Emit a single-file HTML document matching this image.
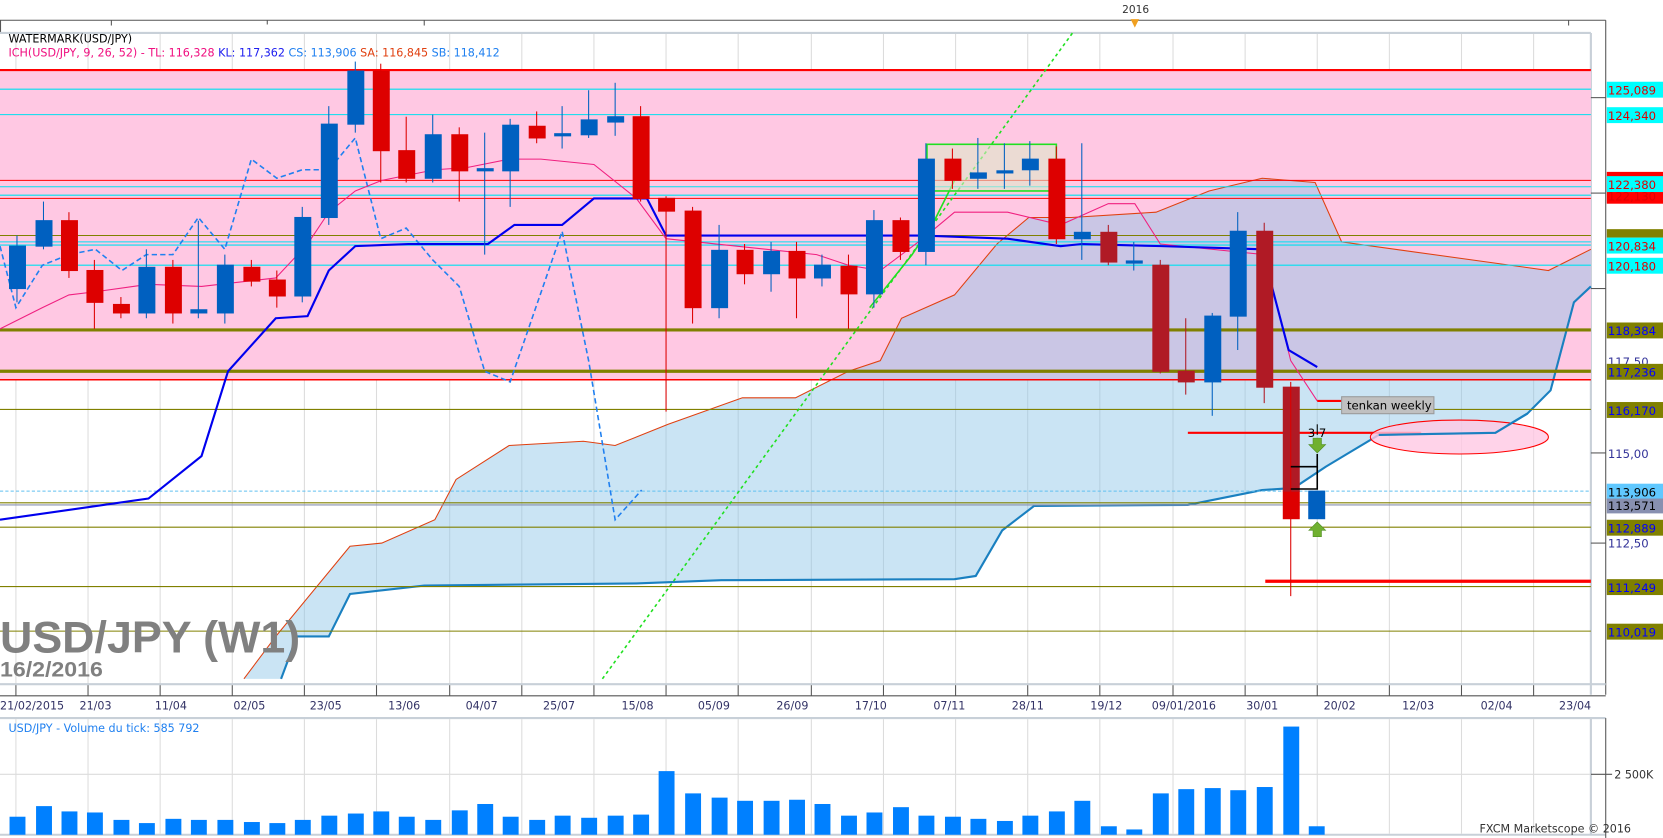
<!DOCTYPE html>
<html><head><meta charset="utf-8"><style>
html,body{margin:0;padding:0;background:#fff;overflow:hidden}
svg{display:block}
text{font-family:"DejaVu Sans","Liberation Sans",sans-serif}
</style></head><body>
<svg width="1663" height="838" viewBox="0 0 1568 790" xmlns="http://www.w3.org/2000/svg">
<rect width="1568" height="790" fill="#fff"/>
<line x1="0" y1="19" x2="1514" y2="19" stroke="#555" stroke-width="1"/>
<line x1="0.5" y1="19" x2="0.5" y2="32" stroke="#555"/>
<line x1="105" y1="19" x2="105" y2="24" stroke="#555"/><line x1="252" y1="19" x2="252" y2="23" stroke="#555"/><line x1="400" y1="19" x2="400" y2="24" stroke="#555"/>
<line x1="1479" y1="19" x2="1479" y2="24" stroke="#555"/>
<text x="1058" y="12" font-size="10" fill="#333">2016</text>
<polygon points="1066,18 1074,18 1070,26" fill="#f0a020"/>
<line x1="1514" y1="19" x2="1514" y2="655" stroke="#555"/>
<line x1="0" y1="31" x2="1500" y2="31" stroke="#c8d0d8" stroke-width="2"/>
<line x1="1500" y1="31" x2="1500" y2="655" stroke="#c8d0d8" stroke-width="2"/>
<g stroke="#dcdcdc" stroke-width="1">
<line x1="15" y1="32" x2="15" y2="645"/><line x1="83" y1="32" x2="83" y2="645"/><line x1="151" y1="32" x2="151" y2="645"/><line x1="219" y1="32" x2="219" y2="645"/><line x1="287" y1="32" x2="287" y2="645"/><line x1="355" y1="32" x2="355" y2="645"/><line x1="424" y1="32" x2="424" y2="645"/><line x1="492" y1="32" x2="492" y2="645"/><line x1="560" y1="32" x2="560" y2="645"/><line x1="628" y1="32" x2="628" y2="645"/><line x1="696" y1="32" x2="696" y2="645"/><line x1="765" y1="32" x2="765" y2="645"/><line x1="833" y1="32" x2="833" y2="645"/><line x1="901" y1="32" x2="901" y2="645"/><line x1="969" y1="32" x2="969" y2="645"/><line x1="1037" y1="32" x2="1037" y2="645"/><line x1="1106" y1="32" x2="1106" y2="645"/><line x1="1174" y1="32" x2="1174" y2="645"/><line x1="1242" y1="32" x2="1242" y2="645"/><line x1="1310" y1="32" x2="1310" y2="645"/><line x1="1378" y1="32" x2="1378" y2="645"/><line x1="1446" y1="32" x2="1446" y2="645"/>
</g>
<rect x="0" y="66" width="1500" height="292" fill="#ffc8e3"/>
<polygon fill="#8ac4e6" fill-opacity="0.45" points="230,640 260,600 330,515 360,512 410,490 430,452 480,420 550,416 580,420 630,400 700,375 750,375 800,350 830,340 850,300 900,278 940,230 970,205 1010,205 1090,200 1140,180 1190,168 1240,172 1265,228 1460,255 1500,235 1500,270 1484,285 1462,368 1440,390 1410,408 1300,410 1270,428 1250,440 1220,460 1190,462 1150,470 1120,476 975,477 945,500 920,543 900,546 680,547 600,550 400,552 330,560 310,600 280,600 265,640"/>
<polyline fill="none" stroke="#e04010" stroke-width="1" points="230,640 260,600 330,515 360,512 410,490 430,452 480,420 550,416 580,420 630,400 700,375 750,375 800,350 830,340 850,300 900,278 940,230 970,205 1010,205 1090,200 1140,180 1190,168 1240,172 1265,228 1460,255 1500,235"/>
<polyline fill="none" stroke="#1a80c0" stroke-width="2" points="265,640 280,600 310,600 330,560 400,552 600,550 680,547 900,546 920,543 945,500 975,477 1120,476 1150,470 1190,462 1220,460 1250,440 1270,428 1300,410 1410,408 1440,390 1462,368 1484,285 1500,270"/>
<g>
<line x1="0" y1="66" x2="1500" y2="66" stroke="#ff0000" stroke-width="2"/>
<line x1="0" y1="84" x2="1500" y2="84" stroke="#00e0f0"/>
<line x1="0" y1="108" x2="1500" y2="108" stroke="#00e0f0"/>
<line x1="0" y1="170" x2="1500" y2="170" stroke="#ff0000"/>
<line x1="0" y1="176" x2="1500" y2="176" stroke="#00e0f0"/>
<line x1="0" y1="184" x2="1500" y2="184" stroke="#00e0f0"/>
<line x1="0" y1="187" x2="1500" y2="187" stroke="#ff0000"/>
<line x1="0" y1="222" x2="1500" y2="222" stroke="#808000"/>
<line x1="0" y1="228" x2="1500" y2="228" stroke="#00e0f0"/>
<line x1="0" y1="231" x2="1500" y2="231" stroke="#00e0f0"/>
<line x1="0" y1="250" x2="1500" y2="250" stroke="#00e0f0"/>
<line x1="0" y1="311" x2="1500" y2="311" stroke="#808000" stroke-width="3"/>
<line x1="0" y1="350" x2="1500" y2="350" stroke="#808000" stroke-width="3"/>
<line x1="0" y1="358" x2="1500" y2="358" stroke="#ff0000" stroke-width="1.5"/>
<line x1="0" y1="386" x2="1500" y2="386" stroke="#808000"/>
<line x1="0" y1="463" x2="1500" y2="463" stroke="#60c0f0" stroke-dasharray="3,2"/>
<line x1="0" y1="474" x2="1500" y2="474" stroke="#808000"/>
<line x1="0" y1="476" x2="1500" y2="476" stroke="#8890b0"/>
<line x1="0" y1="497" x2="1500" y2="497" stroke="#808000"/>
<line x1="0" y1="553" x2="1500" y2="553" stroke="#808000"/>
<line x1="0" y1="595" x2="1500" y2="595" stroke="#808000"/>
<line x1="1120" y1="408" x2="1340" y2="408" stroke="#ff0000" stroke-width="2"/>
<line x1="1193" y1="548" x2="1500" y2="548" stroke="#ff0000" stroke-width="3"/>
</g>
<ellipse cx="1376" cy="412" rx="84" ry="16" fill="#ffc8e3" fill-opacity="0.8" stroke="#ff0000"/>
<polyline fill="none" stroke="#1a80c0" stroke-width="2" points="1300,410 1410,408 1440,390"/>
<line x1="568" y1="640" x2="1012" y2="30" stroke="#20e020" stroke-width="1.5" stroke-dasharray="3,3"/>
<polyline fill="none" stroke="#20e020" stroke-width="1.5" points="820,290 860,240 880,210 905,160"/>
<rect x="874" y="136" width="122" height="44" fill="#dde8c8" fill-opacity="0.6" stroke="#20e020" stroke-width="1.5"/>
<polyline fill="none" stroke="#2080f0" stroke-width="1.5" stroke-dasharray="5,3" points="0,232 15,290 40,250 65,240 90,235 115,255 138,240 163,240 187,205 212,235 237,150 261,168 285,160 310,160 335,130 359,225 383,215 408,245 433,270 457,350 481,360 530,218 555,340 580,490 605,462"/>
<polyline fill="none" stroke="#f02080" stroke-width="1" points="0,310 40,290 65,278 90,275 140,268 190,270 260,262 290,230 310,200 335,180 360,170 410,160 440,158 480,150 510,150 560,155 600,187 628,225 770,240 800,250 830,255 870,225 900,200 950,200 1000,212 1045,192 1070,192 1094,230 1192,240 1217,340 1242,378"/>
<line x1="1242" y1="378" x2="1265" y2="378" stroke="#ff0000" stroke-width="2"/>
<polyline fill="none" stroke="#0000ee" stroke-width="2" points="0,490 140,470 190,430 215,350 260,300 290,298 310,255 335,232 385,230 460,230 485,212 530,212 560,187 610,187 628,222 870,222 950,225 1000,232 1020,230 1095,232 1190,235 1215,330 1242,346"/>
<g stroke-width="1">
<g stroke="#0060c0" fill="#0060c0">
<line x1="16" y1="222" x2="16" y2="285"/><rect x="9" y="232" width="15" height="40"/>
<line x1="41" y1="190" x2="41" y2="235"/><rect x="34" y="208" width="15" height="24"/>
<line x1="138" y1="235" x2="138" y2="300"/><rect x="131" y="252" width="15" height="43"/>
<line x1="187" y1="208" x2="187" y2="300"/><rect x="180" y="292" width="15" height="3"/>
<line x1="212" y1="240" x2="212" y2="305"/><rect x="205" y="250" width="15" height="45"/>
<line x1="285" y1="195" x2="285" y2="285"/><rect x="278" y="205" width="15" height="74"/>
<line x1="310" y1="100" x2="310" y2="212"/><rect x="303" y="117" width="15" height="88"/>
<line x1="335" y1="58" x2="335" y2="125"/><rect x="328" y="67" width="15" height="50"/>
<line x1="408" y1="108" x2="408" y2="172"/><rect x="401" y="127" width="15" height="41"/>
<line x1="457" y1="125" x2="457" y2="240"/><rect x="450" y="159" width="15" height="2"/>
<line x1="481" y1="112" x2="481" y2="195"/><rect x="474" y="118" width="15" height="43"/>
<line x1="530" y1="100" x2="530" y2="140"/><rect x="523" y="126" width="15" height="2"/>
<line x1="555" y1="85" x2="555" y2="130"/><rect x="548" y="113" width="15" height="14"/>
<line x1="580" y1="78" x2="580" y2="128"/><rect x="573" y="110" width="15" height="5"/>
<line x1="678" y1="212" x2="678" y2="300"/><rect x="671" y="236" width="15" height="54"/>
<line x1="727" y1="228" x2="727" y2="275"/><rect x="720" y="237" width="15" height="21"/>
<line x1="775" y1="240" x2="775" y2="270"/><rect x="768" y="250" width="15" height="12"/>
<line x1="824" y1="198" x2="824" y2="290"/><rect x="817" y="208" width="15" height="69"/>
<line x1="873" y1="135" x2="873" y2="250"/><rect x="866" y="150" width="15" height="87"/>
<line x1="922" y1="130" x2="922" y2="178"/><rect x="915" y="163" width="15" height="5"/>
<line x1="947" y1="135" x2="947" y2="178"/><rect x="940" y="161" width="15" height="2"/>
<line x1="971" y1="133" x2="971" y2="175"/><rect x="964" y="150" width="15" height="10"/>
<line x1="1020" y1="135" x2="1020" y2="245"/><rect x="1013" y="219" width="15" height="6"/>
<line x1="1069" y1="228" x2="1069" y2="255"/><rect x="1062" y="246" width="15" height="2"/>
<line x1="1143" y1="295" x2="1143" y2="392"/><rect x="1136" y="298" width="15" height="62"/>
<line x1="1167" y1="200" x2="1167" y2="330"/><rect x="1160" y="218" width="15" height="80"/>
<rect x="1234" y="463" width="15" height="26"/>
</g>
<g stroke="#dd0000" fill="#dd0000">
<line x1="65" y1="200" x2="65" y2="262"/><rect x="58" y="208" width="15" height="47"/>
<line x1="89" y1="245" x2="89" y2="310"/><rect x="82" y="255" width="15" height="30"/>
<line x1="114" y1="280" x2="114" y2="300"/><rect x="107" y="287" width="15" height="8"/>
<line x1="163" y1="245" x2="163" y2="305"/><rect x="156" y="252" width="15" height="43"/>
<line x1="237" y1="245" x2="237" y2="270"/><rect x="230" y="252" width="15" height="13"/>
<line x1="261" y1="255" x2="261" y2="290"/><rect x="254" y="264" width="15" height="15"/>
<line x1="359" y1="60" x2="359" y2="172"/><rect x="352" y="67" width="15" height="75"/>
<line x1="383" y1="110" x2="383" y2="172"/><rect x="376" y="142" width="15" height="26"/>
<line x1="433" y1="120" x2="433" y2="190"/><rect x="426" y="127" width="15" height="34"/>
<line x1="506" y1="105" x2="506" y2="135"/><rect x="499" y="119" width="15" height="11"/>
<line x1="604" y1="100" x2="604" y2="190"/><rect x="597" y="110" width="15" height="77"/>
<line x1="628" y1="185" x2="628" y2="388"/><rect x="621" y="187" width="15" height="12"/>
<line x1="653" y1="195" x2="653" y2="305"/><rect x="646" y="199" width="15" height="91"/>
<line x1="702" y1="230" x2="702" y2="268"/><rect x="695" y="236" width="15" height="22"/>
<line x1="751" y1="228" x2="751" y2="300"/><rect x="744" y="237" width="15" height="25"/>
<line x1="800" y1="240" x2="800" y2="310"/><rect x="793" y="251" width="15" height="26"/>
<line x1="849" y1="205" x2="849" y2="245"/><rect x="842" y="208" width="15" height="29"/>
<line x1="898" y1="140" x2="898" y2="178"/><rect x="891" y="150" width="15" height="20"/>
<line x1="996" y1="138" x2="996" y2="230"/><rect x="989" y="150" width="15" height="75"/>
<rect x="1210" y="463" width="15" height="26"/>
</g>
<g stroke="#b01a25" fill="#b01a25">
<line x1="1045" y1="212" x2="1045" y2="250"/><rect x="1038" y="219" width="15" height="28"/>
<line x1="1094" y1="245" x2="1094" y2="352"/><rect x="1087" y="250" width="15" height="100"/>
<line x1="1118" y1="300" x2="1118" y2="372"/><rect x="1111" y="350" width="15" height="10"/>
<line x1="1192" y1="210" x2="1192" y2="380"/><rect x="1185" y="218" width="15" height="147"/>
<rect x="1210" y="365" width="15" height="98"/>
</g>
<line x1="1217" y1="360" x2="1217" y2="562" stroke="#dd0000"/>
</g>
<polyline fill="none" stroke="#000" stroke-width="1.5" points="1217,440 1242,440 1242,428"/>
<polyline fill="none" stroke="#000" stroke-width="1.5" points="1242,440 1242,461 1217,461"/>
<line x1="1242" y1="400" x2="1242" y2="410" stroke="#000"/>
<text x="1233" y="412" font-size="11" fill="#000">3 7</text>
<polygon points="1238,413 1246,413 1246,419 1250,419 1242,427 1234,419 1238,419" fill="#70b030" stroke="#4a8a20" stroke-width="0.5"/>
<polygon points="1238,506 1246,506 1246,500 1250,500 1242,492 1234,500 1238,500" fill="#70b030" stroke="#4a8a20" stroke-width="0.5"/>
<rect x="1265" y="374" width="87" height="16" fill="#c0c0c0" stroke="#999"/>
<text x="1270" y="386" font-size="11" fill="#000">tenkan weekly</text>
<text x="0" y="615" font-size="42" font-weight="bold" fill="#808080" style="font-family:'Liberation Sans',sans-serif" textLength="283" lengthAdjust="spacingAndGlyphs">USD/JPY (W1)</text>
<text x="0" y="638" font-size="20" font-weight="bold" fill="#808080" style="font-family:'Liberation Sans',sans-serif" textLength="97" lengthAdjust="spacingAndGlyphs">16/2/2016</text>
<text x="8" y="40" font-size="10.5" fill="#000">WATERMARK(USD/JPY)</text>
<text x="8" y="53" font-size="10.5"><tspan fill="#f01080">ICH(USD/JPY, 9, 26, 52) -  TL: 116,328</tspan><tspan fill="#2020f0">  KL: 117,362</tspan><tspan fill="#2080f0">  CS: 113,906</tspan><tspan fill="#e04010">  SA: 116,845</tspan><tspan fill="#2080f0">  SB: 118,412</tspan></text>
<g font-size="11">
<g stroke="#555"><line x1="1500" y1="92" x2="1514" y2="92"/><line x1="1500" y1="182" x2="1514" y2="182"/><line x1="1500" y1="272" x2="1514" y2="272"/><line x1="1500" y1="427" x2="1514" y2="427"/><line x1="1500" y1="512" x2="1514" y2="512"/></g>
<rect x="1515" y="77" width="53" height="15" fill="#00ffff"/><text x="1516" y="89" fill="#e00000">125,089</text>
<rect x="1515" y="101" width="53" height="15" fill="#00ffff"/><text x="1516" y="113" fill="#e00000">124,340</text>
<rect x="1515" y="162" width="53" height="30" fill="#ff0000"/>
<rect x="1515" y="166" width="53" height="15" fill="#00ffff"/><text x="1516" y="178" fill="#e00000">122,380</text>
<text x="1516" y="189" fill="#e00000">122,130</text>
<rect x="1515" y="216" width="53" height="8" fill="#808000"/>
<rect x="1515" y="224" width="53" height="15" fill="#00ffff"/><text x="1516" y="236" fill="#e00000">120,834</text>
<rect x="1515" y="243" width="53" height="15" fill="#00ffff"/><text x="1516" y="255" fill="#e00000">120,180</text>
<rect x="1515" y="304" width="53" height="15" fill="#808000"/><text x="1516" y="316" fill="#0000ff">118,384</text>
<text x="1516" y="345" fill="#333399">117,50</text>
<rect x="1515" y="343" width="53" height="15" fill="#808000"/><text x="1516" y="355" fill="#0000ff">117,236</text>
<rect x="1515" y="379" width="53" height="15" fill="#808000"/><text x="1516" y="391" fill="#0000ff">116,170</text>
<text x="1516" y="432" fill="#333399">115,00</text>
<rect x="1515" y="456" width="53" height="15" fill="#60c8ff"/><text x="1516" y="468" fill="#000">113,906</text>
<rect x="1515" y="470" width="53" height="14" fill="#8890b0"/><text x="1516" y="481" fill="#000">113,571</text>
<rect x="1515" y="490" width="53" height="15" fill="#808000"/><text x="1516" y="502" fill="#0000ff">112,889</text>
<text x="1516" y="516" fill="#333399">112,50</text>
<rect x="1515" y="546" width="53" height="15" fill="#808000"/><text x="1516" y="558" fill="#0000ff">111,249</text>
<rect x="1515" y="588" width="53" height="15" fill="#808000"/><text x="1516" y="600" fill="#0000ff">110,019</text>
</g>
<line x1="0" y1="645" x2="1514" y2="645" stroke="#c8d0d8" stroke-width="2"/>
<line x1="0" y1="656" x2="1514" y2="656" stroke="#555"/>
<g stroke="#555">
<line x1="15" y1="646" x2="15" y2="656"/><line x1="83" y1="646" x2="83" y2="656"/><line x1="151" y1="646" x2="151" y2="656"/><line x1="219" y1="646" x2="219" y2="656"/><line x1="287" y1="646" x2="287" y2="656"/><line x1="355" y1="646" x2="355" y2="656"/><line x1="424" y1="646" x2="424" y2="656"/><line x1="492" y1="646" x2="492" y2="656"/><line x1="560" y1="646" x2="560" y2="656"/><line x1="628" y1="646" x2="628" y2="656"/><line x1="696" y1="646" x2="696" y2="656"/><line x1="765" y1="646" x2="765" y2="656"/><line x1="833" y1="646" x2="833" y2="656"/><line x1="901" y1="646" x2="901" y2="656"/><line x1="969" y1="646" x2="969" y2="656"/><line x1="1037" y1="646" x2="1037" y2="656"/><line x1="1106" y1="646" x2="1106" y2="656"/><line x1="1174" y1="646" x2="1174" y2="656"/><line x1="1242" y1="646" x2="1242" y2="656"/><line x1="1310" y1="646" x2="1310" y2="656"/><line x1="1378" y1="646" x2="1378" y2="656"/><line x1="1446" y1="646" x2="1446" y2="656"/>
</g>
<g font-size="10.5" fill="#333366">
<text x="0" y="669">21/02/2015</text><text x="75" y="669">21/03</text><text x="146" y="669">11/04</text><text x="220" y="669">02/05</text><text x="292" y="669">23/05</text><text x="366" y="669">13/06</text><text x="439" y="669">04/07</text><text x="512" y="669">25/07</text><text x="586" y="669">15/08</text><text x="658" y="669">05/09</text><text x="732" y="669">26/09</text><text x="806" y="669">17/10</text><text x="880" y="669">07/11</text><text x="954" y="669">28/11</text><text x="1028" y="669">19/12</text><text x="1086" y="669">09/01/2016</text><text x="1175" y="669">30/01</text><text x="1248" y="669">20/02</text><text x="1322" y="669">12/03</text><text x="1396" y="669">02/04</text><text x="1470" y="669">23/04</text>
</g>
<line x1="0" y1="677" x2="1514" y2="677" stroke="#c8d0d8" stroke-width="2"/>
<line x1="0" y1="787" x2="1514" y2="787" stroke="#c8d0d8" stroke-width="2"/>
<line x1="1500" y1="677" x2="1500" y2="787" stroke="#c8d0d8" stroke-width="2"/>
<line x1="1514" y1="677" x2="1514" y2="790" stroke="#555"/>
<line x1="0" y1="730" x2="1500" y2="730" stroke="#dcdcdc"/>
<line x1="1500" y1="730" x2="1520" y2="730" stroke="#555"/>
<text x="1522" y="734" font-size="10.5" fill="#333">2 500K</text>
<g stroke="#dcdcdc"><line x1="15" y1="678" x2="15" y2="786"/><line x1="83" y1="678" x2="83" y2="786"/><line x1="151" y1="678" x2="151" y2="786"/><line x1="219" y1="678" x2="219" y2="786"/><line x1="287" y1="678" x2="287" y2="786"/><line x1="355" y1="678" x2="355" y2="786"/><line x1="424" y1="678" x2="424" y2="786"/><line x1="492" y1="678" x2="492" y2="786"/><line x1="560" y1="678" x2="560" y2="786"/><line x1="628" y1="678" x2="628" y2="786"/><line x1="696" y1="678" x2="696" y2="786"/><line x1="765" y1="678" x2="765" y2="786"/><line x1="833" y1="678" x2="833" y2="786"/><line x1="901" y1="678" x2="901" y2="786"/><line x1="969" y1="678" x2="969" y2="786"/><line x1="1037" y1="678" x2="1037" y2="786"/><line x1="1106" y1="678" x2="1106" y2="786"/><line x1="1174" y1="678" x2="1174" y2="786"/><line x1="1242" y1="678" x2="1242" y2="786"/><line x1="1310" y1="678" x2="1310" y2="786"/><line x1="1378" y1="678" x2="1378" y2="786"/><line x1="1446" y1="678" x2="1446" y2="786"/></g>
<text x="8" y="690" font-size="10.5" fill="#2080f0">USD/JPY - Volume du tick: 585 792</text>
<g fill="#0080ff">
<rect x="9" y="770" width="15" height="17"/><rect x="34" y="760" width="15" height="27"/><rect x="58" y="765" width="15" height="22"/><rect x="82" y="766" width="15" height="21"/><rect x="107" y="773" width="15" height="14"/><rect x="131" y="776" width="15" height="11"/><rect x="156" y="772" width="15" height="15"/><rect x="180" y="773" width="15" height="14"/><rect x="205" y="773" width="15" height="14"/><rect x="230" y="775" width="15" height="12"/><rect x="254" y="776" width="15" height="11"/><rect x="278" y="773" width="15" height="14"/><rect x="303" y="769" width="15" height="18"/><rect x="328" y="767" width="15" height="20"/><rect x="352" y="765" width="15" height="22"/><rect x="376" y="770" width="15" height="17"/><rect x="401" y="773" width="15" height="14"/><rect x="426" y="764" width="15" height="23"/><rect x="450" y="758" width="15" height="29"/><rect x="474" y="770" width="15" height="17"/><rect x="499" y="773" width="15" height="14"/><rect x="523" y="769" width="15" height="18"/><rect x="548" y="771" width="15" height="16"/><rect x="573" y="769" width="15" height="18"/><rect x="597" y="768" width="15" height="19"/><rect x="621" y="727" width="15" height="60"/><rect x="646" y="748" width="15" height="39"/><rect x="671" y="752" width="15" height="35"/><rect x="695" y="755" width="15" height="32"/><rect x="720" y="755" width="15" height="32"/><rect x="744" y="754" width="15" height="33"/><rect x="768" y="758" width="15" height="29"/><rect x="793" y="769" width="15" height="18"/><rect x="817" y="766" width="15" height="21"/><rect x="842" y="761" width="15" height="26"/><rect x="866" y="769" width="15" height="18"/><rect x="891" y="770" width="15" height="17"/><rect x="915" y="772" width="15" height="15"/><rect x="940" y="774" width="15" height="13"/><rect x="964" y="769" width="15" height="18"/><rect x="989" y="765" width="15" height="22"/><rect x="1013" y="755" width="15" height="32"/><rect x="1038" y="779" width="15" height="8"/><rect x="1062" y="782" width="15" height="5"/><rect x="1087" y="748" width="15" height="39"/><rect x="1111" y="744" width="15" height="43"/><rect x="1136" y="743" width="15" height="44"/><rect x="1160" y="745" width="15" height="42"/><rect x="1185" y="742" width="15" height="45"/><rect x="1210" y="685" width="15" height="102"/><rect x="1234" y="779" width="15" height="8"/>
</g>
<text x="1395" y="785" font-size="10.5" fill="#333">FXCM Marketscope © 2016</text>
</svg>
</body></html>
